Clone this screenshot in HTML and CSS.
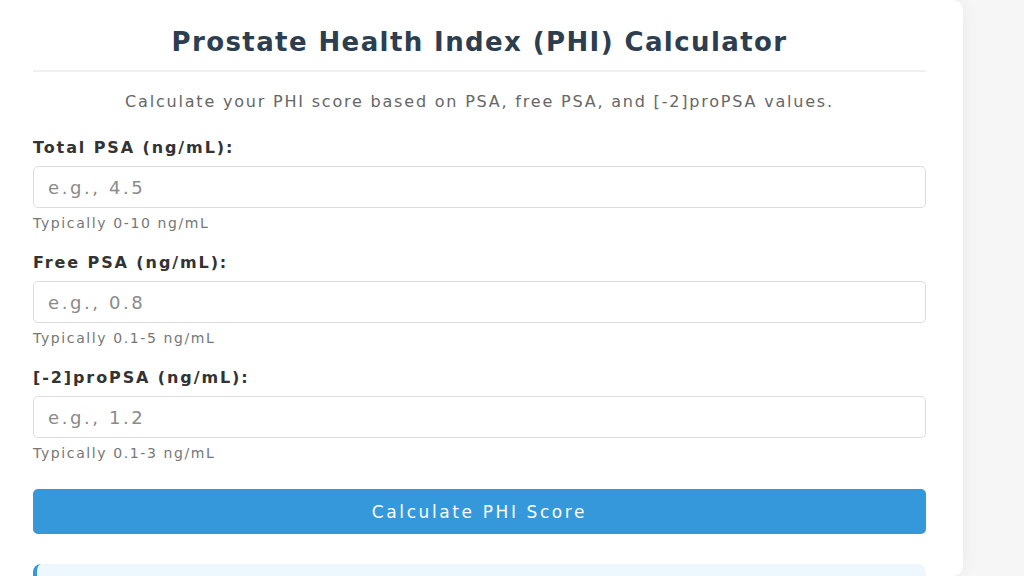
FILE: index.html
```html
<!DOCTYPE html>
<html lang="en">
<head>
<meta charset="utf-8">
<title>Prostate Health Index (PHI) Calculator</title>
<link rel="stylesheet" href="styles.css">
</head>
<body>
<div class="page">
  <div class="card">
    <h1 class="title">Prostate Health Index (PHI) Calculator</h1>
    <p class="intro">Calculate your PHI score based on PSA, free PSA, and [-2]proPSA values.</p>
    <form class="form">
      <div class="field">
        <label class="label" for="total">Total PSA (ng/mL):</label>
        <input class="input" id="total" type="text" placeholder="e.g., 4.5">
        <div class="hint">Typically 0-10 ng/mL</div>
      </div>
      <div class="field">
        <label class="label" for="free">Free PSA (ng/mL):</label>
        <input class="input" id="free" type="text" placeholder="e.g., 0.8">
        <div class="hint">Typically 0.1-5 ng/mL</div>
      </div>
      <div class="field">
        <label class="label" for="pro">[-2]proPSA (ng/mL):</label>
        <input class="input" id="pro" type="text" placeholder="e.g., 1.2">
        <div class="hint">Typically 0.1-3 ng/mL</div>
      </div>
      <button class="button" type="button">Calculate PHI Score</button>
    </form>
    <div class="result"></div>
  </div>
</div>
</body>
</html>
```
FILE: styles.css
```css
html, body {
  margin: 0;
  padding: 0;
  background: #f6f6f6;
  font-family: "DejaVu Sans", "Open Sans", sans-serif;
}
.page {
  display: flex;
  height: 576px;
  overflow: hidden;
}
.card {
  width: 963px;
  box-sizing: border-box;
  background: #ffffff;
  border-radius: 0 10px 10px 0;
  box-shadow: 0 0 18px rgba(0, 0, 0, 0.06);
  padding: 27px 37px 30px 33px;
}
.title {
  margin: 0;
  font-size: 26px;
  line-height: 31px;
  font-weight: 700;
  letter-spacing: 1.4px;
  color: #2c3e50;
  text-align: center;
  padding-bottom: 12px;
  border-bottom: 2px solid #f0f0f0;
}
.intro {
  margin: 18px 0 0;
  font-size: 16px;
  line-height: 24px;
  letter-spacing: 1.8px;
  color: #666666;
  text-align: center;
}
.form {
  display: flex;
  flex-direction: column;
  gap: 20px;
  margin-top: 23px;
}
.field {
  display: flex;
  flex-direction: column;
}
.label {
  font-size: 16px;
  line-height: 22px;
  font-weight: 700;
  letter-spacing: 1.9px;
  color: #333333;
  margin-bottom: 7px;
}
.input {
  height: 42px;
  box-sizing: border-box;
  border: 1px solid #dddddd;
  border-radius: 5px;
  padding: 0 14px;
  font-family: "DejaVu Sans", sans-serif;
  font-size: 18px;
  letter-spacing: 2.6px;
  color: #333333;
  outline: none;
}
.input::placeholder {
  color: #8a8a8a;
}
.hint {
  margin-top: 6px;
  font-size: 14px;
  line-height: 18px;
  letter-spacing: 1.6px;
  color: #777777;
}
.button {
  margin-top: 7px;
  height: 45px;
  border: none;
  border-radius: 5px;
  background: #3498db;
  color: #ffffff;
  font-family: "DejaVu Sans", sans-serif;
  font-size: 17px;
  letter-spacing: 2.6px;
  cursor: pointer;
}
.result {
  margin-top: 30px;
  height: 60px;
  background: #eef7fd;
  border-left: 4px solid #3498db;
  border-radius: 8px;
}
```
